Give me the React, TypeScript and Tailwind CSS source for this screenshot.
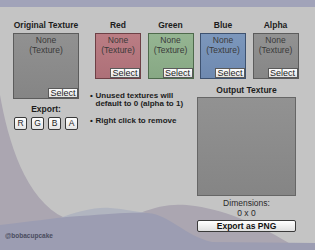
import React from "react";

const Select = () => (
  <div className="mt-auto self-end w-[30px] h-[10px] bg-gradient-to-b from-[#ffffff] to-[#e2e2e2] border border-[#5a5a5a] text-[9px] leading-[8px] text-[#1e1e1e] flex items-center justify-center">
    Select
  </div>
);

const TexBox = ({ size, bg, border }: { size: string; bg: string; border: string }) => (
  <div className={`${size} ${bg} ${border} border flex flex-col items-center pt-[1px]`}>
    <div className="text-[8.5px] leading-[10px] text-[#3a3a3a] text-center">
      None
      <br />
      (Texture)
    </div>
    <Select />
  </div>
);

const Channel = ({ label, bg, border }: { label: string; bg: string; border: string }) => (
  <div className="flex flex-col items-center w-[46px]">
    <div className="h-[10px] leading-[10px] text-[8.5px] font-bold text-[#1c1c1c]">{label}</div>
    <div className="mt-[3px]">
      <TexBox size="w-[46px] h-[46px]" bg={bg} border={border} />
    </div>
  </div>
);

const Letter = ({ c }: { c: string }) => (
  <div className="w-[13px] h-[13px] rounded-[2px] border border-[#3a3a3a] bg-gradient-to-b from-[#ffffff] to-[#e4e4e4] text-[8.5px] leading-[11px] text-[#1e1e1e] flex items-center justify-center">
    {c}
  </div>
);

export default function App() {
  return (
    <div className="w-[315px] h-[250px] relative overflow-hidden bg-[#c4c4c4] font-['Liberation_Sans',Arial,sans-serif]">
      <svg className="absolute inset-0" width="315" height="250" viewBox="0 0 315 250">
        <path
          d="M0,95 C8,140 25,200 65,218 L140,213 C160,205 175,203 195,206 C230,211 265,228 292,245 L292,250 L0,250 Z"
          fill="#aba6b1"
        />
        <path
          d="M58,219 C78,211 95,207 110,208 C125,209 138,212 152,214 L152,250 L58,250 Z"
          fill="#b1b5c0"
        />
        <path
          d="M0,225 C30,222 50,218 80,216 C110,214 130,212 148,213 C170,215 185,236 212,242 L315,243 L315,250 L0,250 Z"
          fill="#9c9db2"
        />
      </svg>
      <div className="relative flex flex-col">
        <div className="h-[7px] bg-[#a1a3b9]" />
        <div className="flex pt-[13px] pl-[13px]">
          {/* left column */}
          <div className="flex flex-col items-center w-[66px]">
            <div className="h-[10px] leading-[10px] text-[8.5px] font-bold text-[#1c1c1c] whitespace-nowrap">
              Original Texture
            </div>
            <div className="mt-[3px]">
              <TexBox
                size="w-[66px] h-[66px]"
                bg="bg-gradient-to-b from-[#919191] to-[#858585]"
                border="border-[#5c5c5c]"
              />
            </div>
            <div className="mt-[5px] h-[10px] leading-[10px] text-[8.5px] font-bold text-[#1c1c1c]">Export:</div>
            <div className="mt-[3px] flex gap-[4px]">
              <Letter c="R" />
              <Letter c="G" />
              <Letter c="B" />
              <Letter c="A" />
            </div>
          </div>
          {/* right area */}
          <div className="ml-[11px] flex flex-col">
            <div className="flex pl-[5px] gap-[6.5px]">
              <Channel label="Red" bg="bg-gradient-to-b from-[#bb7d84] to-[#ad7078]" border="border-[#6e4046]" />
              <Channel label="Green" bg="bg-gradient-to-b from-[#95b592] to-[#87a884]" border="border-[#4e6a4c]" />
              <Channel label="Blue" bg="bg-gradient-to-b from-[#7c97bc] to-[#6e89b0]" border="border-[#3e5270]" />
              <Channel label="Alpha" bg="bg-gradient-to-b from-[#929292] to-[#868686]" border="border-[#5c5c5c]" />
            </div>
            <div className="flex mt-[6px]">
              <div className="w-[107px] pt-[7px] text-[8px] leading-[8px] font-bold text-[#1c1c1c]">
                <div className="flex">
                  <span className="w-[5.5px] shrink-0">•</span>
                  <span>
                    Unused textures will
                    <br />
                    default to 0 (alpha to 1)
                  </span>
                </div>
                <div className="flex mt-[9px]">
                  <span className="w-[5.5px] shrink-0">•</span>
                  <span>Right click to remove</span>
                </div>
              </div>
              <div className="flex flex-col items-center w-[99px]">
                <div className="h-[10px] leading-[10px] text-[8.5px] font-bold text-[#1c1c1c]">Output Texture</div>
                <div className="mt-[2px] w-[99px] h-[99px] border border-[#666666] bg-gradient-to-b from-[#929292] to-[#858585]" />
                <div className="mt-[2px] text-[8.5px] leading-[10px] text-[#2a2a2a] text-center">
                  Dimensions:
                  <br />0 x 0
                </div>
                <div className="mt-[2px] w-[99px] h-[12px] rounded-[2px] border border-[#3a3a3a] bg-gradient-to-b from-[#ffffff] to-[#e0e0e0] text-[8.5px] leading-[10px] font-bold text-[#111] flex items-center justify-center">
                  Export as PNG
                </div>
              </div>
            </div>
          </div>
        </div>
        <div className="pl-[5px] text-[6.5px] leading-[8px] font-bold text-[#4a4c5e]">@bobacupcake</div>
      </div>
    </div>
  );
}
